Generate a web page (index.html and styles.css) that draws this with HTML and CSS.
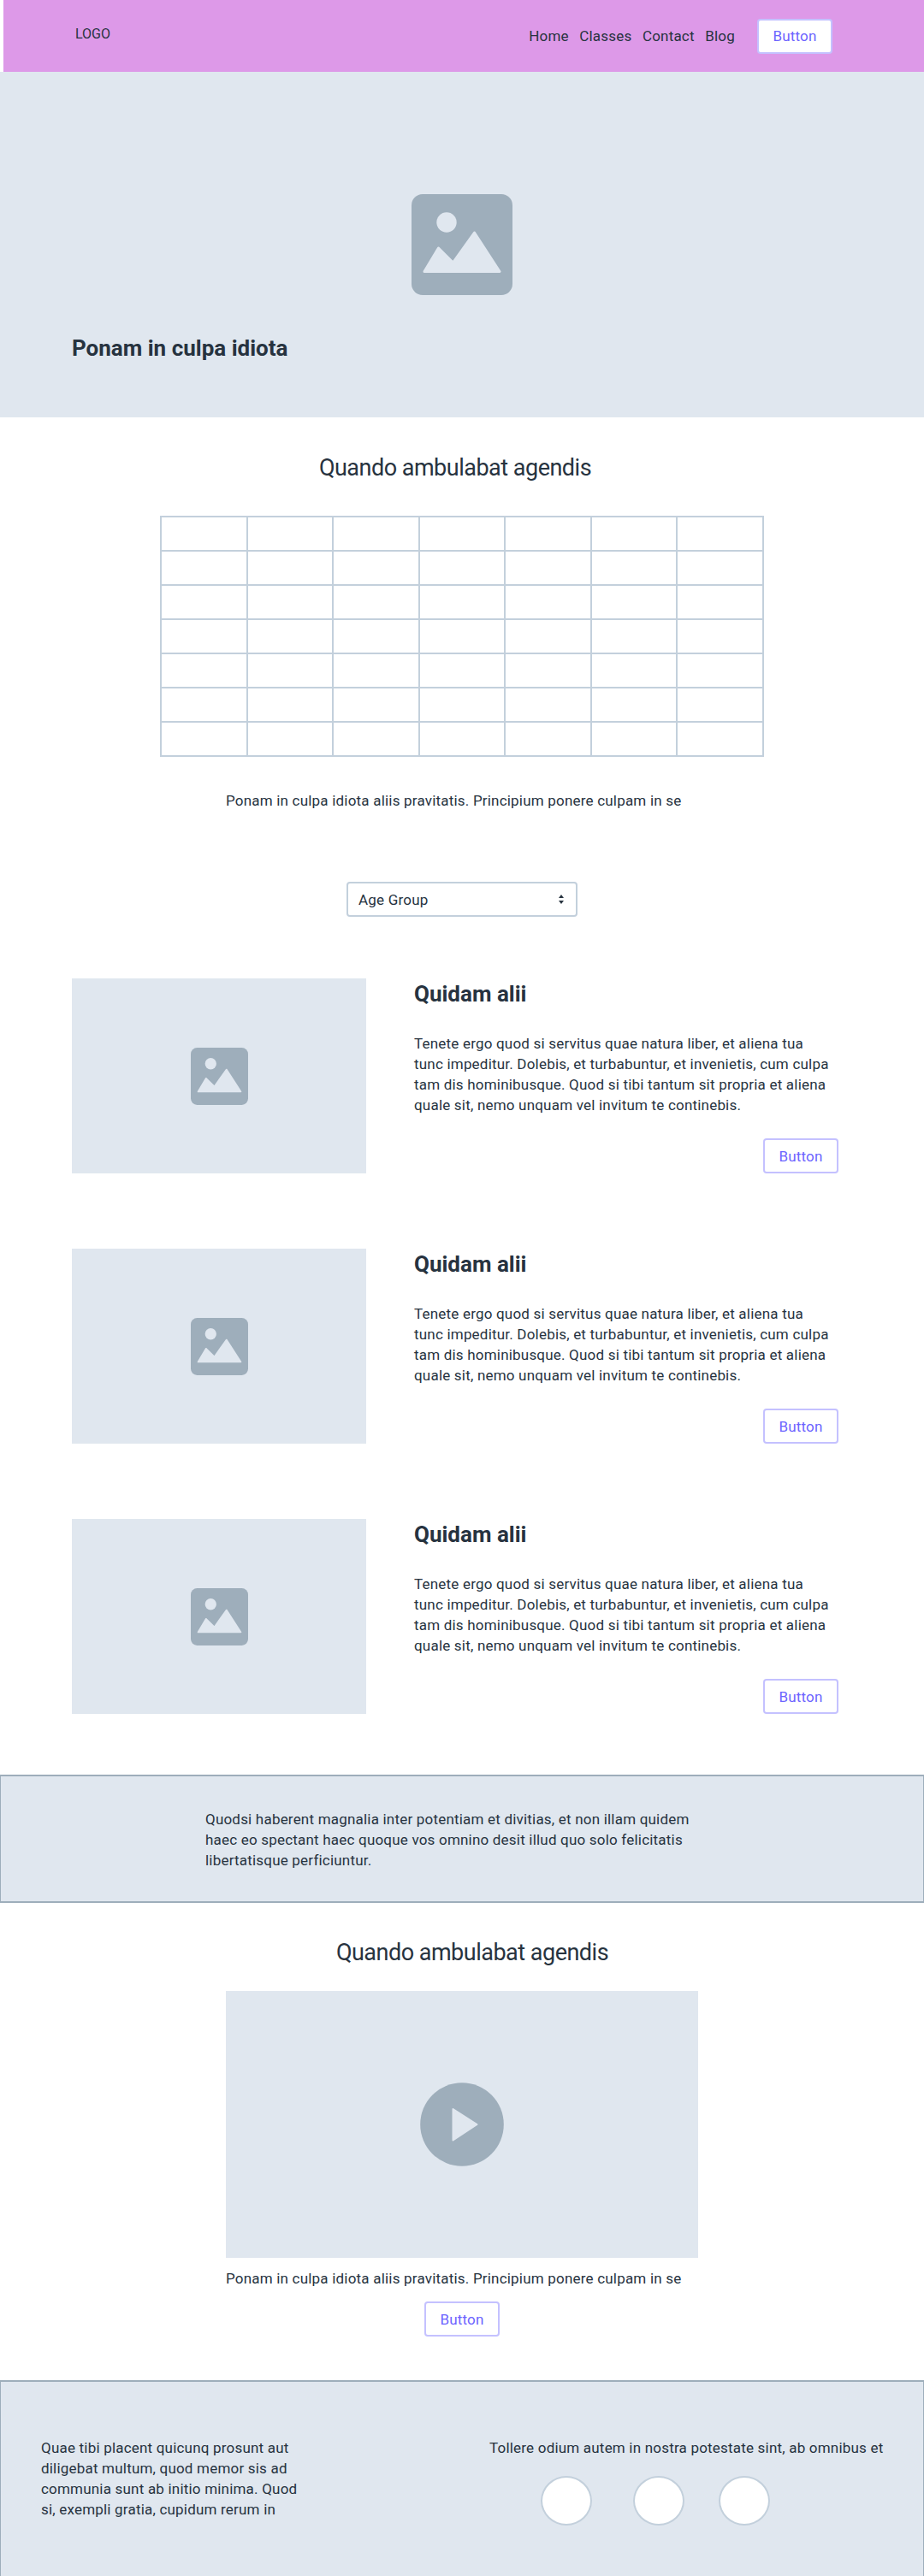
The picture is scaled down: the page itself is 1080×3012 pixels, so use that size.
FILE: index.html
```html
<!DOCTYPE html>
<html lang="la">
<head>
<meta charset="utf-8">
<title>Quando ambulabat agendis</title>
<link rel="stylesheet" href="styles.css">
</head>
<body>

<!-- HEADER -->
<header class="topbar">
	<div class="logo">LOGO</div>
	<nav class="nav">
		<a href="#">Home</a>
		<a href="#">Classes</a>
		<a href="#">Contact</a>
		<a href="#">Blog</a>
	</nav>
	<a class="button button-top" href="#">Button</a>
</header>

<!-- HERO -->
<section class="hero">
	<svg class="hero-icon" viewBox="0 0 118 118"><rect width="118" height="118" rx="13" fill="#9eaebb"/><circle cx="41" cy="33" r="11.7" fill="#e0e7ef"/><path d="M15 90.5 L31.5 63 L48.5 80 L73.5 45 L103 90.5 Z" fill="#e0e7ef" stroke="#e0e7ef" stroke-width="3" stroke-linejoin="round"/></svg>
	<h1 class="hero-title">Ponam in culpa idiota</h1>
</section>

<!-- TABLE -->
<h2 class="title title-table">Quando ambulabat agendis</h2>
<table class="grid">
	<tr><td></td><td></td><td></td><td></td><td></td><td></td><td></td></tr>
	<tr><td></td><td></td><td></td><td></td><td></td><td></td><td></td></tr>
	<tr><td></td><td></td><td></td><td></td><td></td><td></td><td></td></tr>
	<tr><td></td><td></td><td></td><td></td><td></td><td></td><td></td></tr>
	<tr><td></td><td></td><td></td><td></td><td></td><td></td><td></td></tr>
	<tr><td></td><td></td><td></td><td></td><td></td><td></td><td></td></tr>
	<tr><td></td><td></td><td></td><td></td><td></td><td></td><td></td></tr>
</table>
<p class="caption caption-table">Ponam in culpa idiota aliis pravitatis. Principium ponere culpam in se</p>

<div class="select">
	<span>Age Group</span>
	<svg class="select-arrows" viewBox="0 0 6 11"><path d="M3 0 L6 4 L0 4 Z M3 11 L6 7 L0 7 Z" fill="#27333f"/></svg>
</div>

<!-- CARDS -->
<section class="cards">
	<article class="card">
		<div class="card-image">
			<svg class="card-icon" viewBox="0 0 118 118"><rect width="118" height="118" rx="13" fill="#9eaebb"/><circle cx="41" cy="33" r="11.7" fill="#e0e7ef"/><path d="M15 90.5 L31.5 63 L48.5 80 L73.5 45 L103 90.5 Z" fill="#e0e7ef" stroke="#e0e7ef" stroke-width="3" stroke-linejoin="round"/></svg>
		</div>
		<div class="card-body">
			<h3 class="card-title">Quidam alii</h3>
			<p class="card-text">Tenete ergo quod si servitus quae natura liber, et aliena tua tunc impeditur. Dolebis, et turbabuntur, et invenietis, cum culpa tam dis hominibusque. Quod si tibi tantum sit propria et aliena quale sit, nemo unquam vel invitum te continebis.</p>
			<a class="button card-button" href="#">Button</a>
		</div>
	</article>
	<article class="card">
		<div class="card-image">
			<svg class="card-icon" viewBox="0 0 118 118"><rect width="118" height="118" rx="13" fill="#9eaebb"/><circle cx="41" cy="33" r="11.7" fill="#e0e7ef"/><path d="M15 90.5 L31.5 63 L48.5 80 L73.5 45 L103 90.5 Z" fill="#e0e7ef" stroke="#e0e7ef" stroke-width="3" stroke-linejoin="round"/></svg>
		</div>
		<div class="card-body">
			<h3 class="card-title">Quidam alii</h3>
			<p class="card-text">Tenete ergo quod si servitus quae natura liber, et aliena tua tunc impeditur. Dolebis, et turbabuntur, et invenietis, cum culpa tam dis hominibusque. Quod si tibi tantum sit propria et aliena quale sit, nemo unquam vel invitum te continebis.</p>
			<a class="button card-button" href="#">Button</a>
		</div>
	</article>
	<article class="card">
		<div class="card-image">
			<svg class="card-icon" viewBox="0 0 118 118"><rect width="118" height="118" rx="13" fill="#9eaebb"/><circle cx="41" cy="33" r="11.7" fill="#e0e7ef"/><path d="M15 90.5 L31.5 63 L48.5 80 L73.5 45 L103 90.5 Z" fill="#e0e7ef" stroke="#e0e7ef" stroke-width="3" stroke-linejoin="round"/></svg>
		</div>
		<div class="card-body">
			<h3 class="card-title">Quidam alii</h3>
			<p class="card-text">Tenete ergo quod si servitus quae natura liber, et aliena tua tunc impeditur. Dolebis, et turbabuntur, et invenietis, cum culpa tam dis hominibusque. Quod si tibi tantum sit propria et aliena quale sit, nemo unquam vel invitum te continebis.</p>
			<a class="button card-button" href="#">Button</a>
		</div>
	</article>
</section>

<!-- CALLOUT -->
<section class="callout">
	<p class="callout-text">Quodsi haberent magnalia inter potentiam et divitias, et non illam quidem haec eo spectant haec quoque vos omnino desit illud quo solo felicitatis libertatisque perficiuntur.</p>
</section>

<!-- VIDEO -->
<h2 class="title title-video">Quando ambulabat agendis</h2>
<div class="video">
	<svg class="play" viewBox="0 0 98 98"><circle cx="49" cy="49" r="48.8" fill="#9eaebb"/><path d="M38.5 31 L66.5 49 L38.5 67.5 Z" fill="#e0e7ef" stroke="#e0e7ef" stroke-width="2" stroke-linejoin="round"/></svg>
</div>
<p class="caption caption-video">Ponam in culpa idiota aliis pravitatis. Principium ponere culpam in se</p>
<a class="button video-button" href="#">Button</a>

<!-- FOOTER -->
<footer class="footer">
	<p class="footer-text">Quae tibi placent quicunq prosunt aut diligebat multum, quod memor sis ad communia sunt ab initio minima. Quod si, exempli gratia, cupidum rerum in</p>
	<div class="footer-right">
		<p class="footer-line">Tollere odium autem in nostra potestate sint, ab omnibus et</p>
		<div class="dots">
			<span class="dot dot-first"></span>
			<span class="dot"></span>
			<span class="dot"></span>
		</div>
	</div>
</footer>

</body>
</html>
```

FILE: styles.css
```css
* {
	box-sizing: border-box;
}

body {
	margin: 0;
	background-color: white;
	color: #27333f;
	font-family: "Roboto", "Liberation Sans", sans-serif;
	font-size: 17px;
	letter-spacing: 0.2px;
	line-height: 24px;
	overflow-x: hidden;
}

p, h1, h2, h3 {
	margin: 0;
}

a {
	color: inherit;
	text-decoration: none;
}

.button {
	display: flex;
	align-items: center;
	justify-content: center;
	width: 88px;
	height: 41px;
	background-color: white;
	border: 2px solid rgba(108, 99, 255, 0.4);
	border-radius: 4px;
	color: #6c63ff;
}

/* header */
.topbar {
	display: flex;
	align-items: center;
	height: 84px;
	margin-left: 4px;
	padding-right: 107px;
	background-color: #dd99e8;
}

.logo {
	margin-left: 84px;
	margin-right: auto;
	padding-bottom: 4px;
	font-size: 16px;
	letter-spacing: 0;
}

.nav {
	display: flex;
	gap: 12.5px;
}

.button-top {
	margin-left: 26px;
}

/* hero */
.hero {
	height: 404px;
	padding: 143px 84px 0;
	background-color: #e0e7ef;
}

.hero-icon {
	display: block;
	width: 118px;
	height: 118px;
	margin-left: 397px;
}

.hero-title {
	margin-top: 46px;
	font-size: 26px;
	letter-spacing: 0;
	line-height: 32px;
	font-weight: 700;
}

/* section titles */
.title {
	font-size: 27px;
	letter-spacing: -0.5px;
	line-height: 36px;
	font-weight: 400;
	text-align: center;
}

.title-table {
	margin-top: 41px;
	padding-right: 16px;
}

.title-video {
	margin-top: 40px;
	padding-left: 24px;
}

/* table */
.grid {
	width: 706px;
	margin: 38px auto 0;
	border-collapse: collapse;
	table-layout: fixed;
}

.grid td {
	height: 40px;
	padding: 0;
	border: 2px solid #c3d0dc;
}

.caption {
	width: 552px;
	margin-left: 264px;
	white-space: nowrap;
}

.caption-table {
	margin-top: 39px;
}

.caption-video {
	margin-top: 12px;
}

/* select */
.select {
	display: flex;
	align-items: center;
	justify-content: space-between;
	width: 270px;
	height: 41px;
	margin: 83px 0 0 405px;
	padding: 0 14px 0 12px;
	border: 2px solid #c3d0dc;
	border-radius: 4px;
}

.select-arrows {
	width: 6px;
	height: 11px;
}

/* cards */
.cards {
	margin-top: 72px;
	padding: 0 100px 0 84px;
}

.card {
	display: flex;
	gap: 56px;
	height: 228px;
	margin-bottom: 88px;
}

.card-image {
	display: flex;
	align-items: center;
	justify-content: center;
	flex: 0 0 344px;
	background-color: #e0e7ef;
}

.card-icon {
	width: 67px;
	height: 67px;
}

.card-body {
	display: flex;
	flex-direction: column;
	flex: 1;
}

.card-title {
	font-size: 26px;
	letter-spacing: 0;
	line-height: 36px;
	font-weight: 700;
}

.card-text {
	width: 490px;
	margin-top: 28px;
}

.card-button {
	align-self: flex-end;
	margin-top: auto;
}

/* callout */
.callout {
	height: 150px;
	margin-top: -17px;
	padding: 38px 240px 0 239px;
	background-color: #e0e7ef;
	border: solid #9eaebb;
	border-width: 2px 1px;
}

.callout-text {
	width: 580px;
}

/* video */
.video {
	display: flex;
	align-items: center;
	justify-content: center;
	width: 552px;
	height: 312px;
	margin: 27px 0 0 264px;
	background-color: #e0e7ef;
}

.play {
	width: 98px;
	height: 98px;
}

.video-button {
	margin: 15px 0 0 496px;
}

/* footer */
.footer {
	display: flex;
	justify-content: space-between;
	height: 229px;
	margin-top: 51px;
	padding: 65px 48px 0 47px;
	background-color: #e0e7ef;
	border: solid #9eaebb;
	border-width: 2px 1px 0;
}

.footer-text {
	width: 310px;
}

.footer-right {
	width: 459px;
}

.footer-line {
	white-space: nowrap;
}

.dots {
	display: flex;
	gap: 40px;
	margin-top: 21px;
	padding-left: 60px;
}

.dot {
	width: 60px;
	height: 58px;
	background-color: white;
	border: 2px solid #c3d0dc;
	border-radius: 50%;
}

.dot-first {
	margin-right: 8px;
}
```
